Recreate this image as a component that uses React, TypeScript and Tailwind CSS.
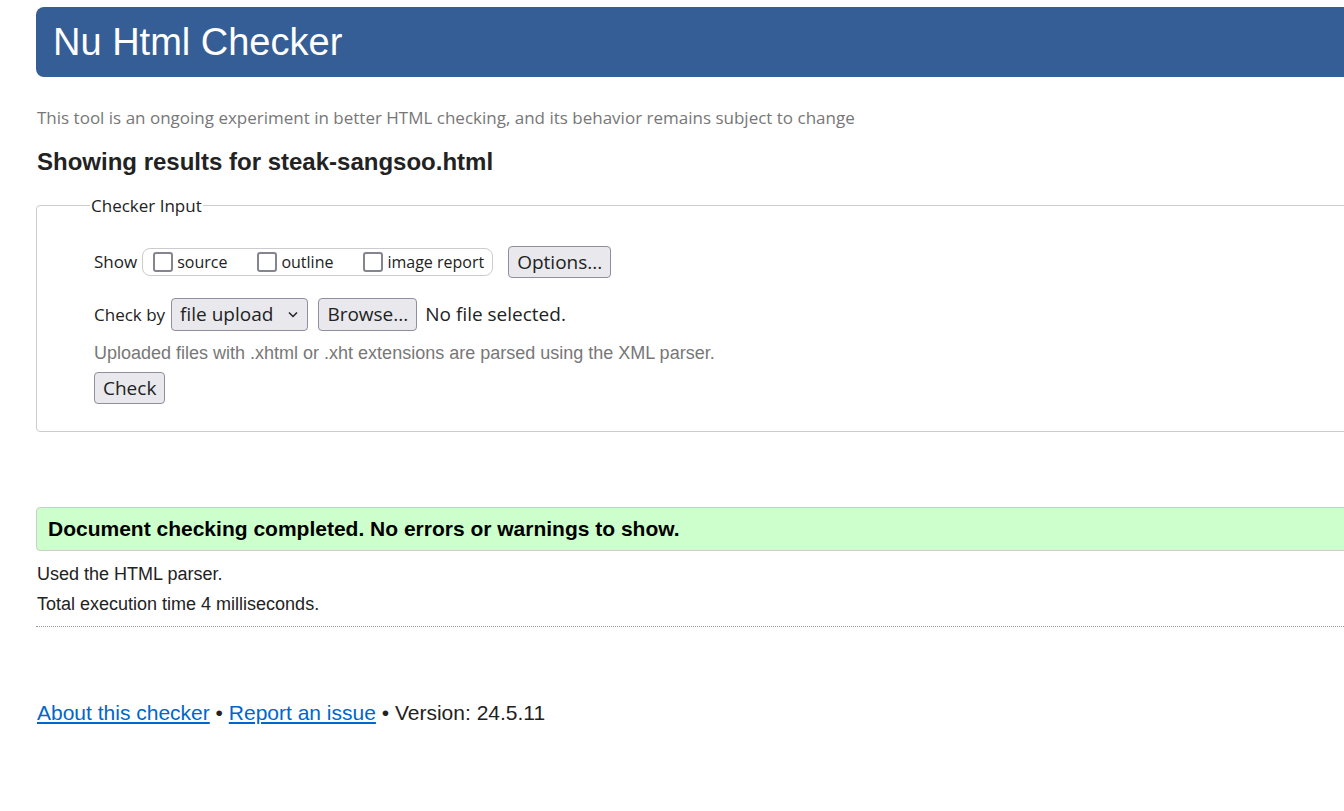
import React from "react";

const ui = { fontFamily: '"Open Sans", "Noto Sans", sans-serif' };
const arial = { fontFamily: '"Liberation Sans", Arial, sans-serif' };

function Box() {
  return <span className="inline-block w-[20px] h-[20px] border-2 border-[#85858f] rounded-[3px] bg-white mr-[4px]" />;
}

export default function App() {
  return (
    <div className="w-[1344px] h-[811px] overflow-hidden bg-white text-[#222]" style={arial}>
      <div className="w-[1400px] pl-[36px] pt-[7px]">
        <div className="h-[70px] bg-[#365e96] rounded-l-[8px] flex items-center pl-[17px]">
          <h1 className="text-[38px] text-white leading-none">Nu Html Checker</h1>
        </div>
        <p className="mt-[29px] text-[17px] text-[#777] leading-[24px] pl-[1px]" style={ui}>
          This tool is an ongoing experiment in better HTML checking, and its behavior remains subject to change
        </p>
        <h2 className="mt-[18px] text-[24px] font-bold leading-[28px] pl-[1px]">Showing results for steak-sangsoo.html</h2>
        <fieldset className="mt-[29px] border border-[#ccc] rounded-l-[4px] pl-[57px] pt-[28px] relative h-[227px]" style={ui}>
          <legend className="px-[1px] text-[17px] leading-[17px] text-[#222] absolute top-[-9px] left-[53px] bg-white">Checker Input</legend>
          <div className="flex items-center h-[32px] mt-[12px] text-[16px]">
            <span className="mr-[5px] text-[17px]">Show</span>
            <span className="flex items-center h-[28px] border border-[#ccc] rounded-[8px] pl-[10px] pr-[8px]">
              <label className="flex items-center"><Box />source</label>
              <label className="flex items-center ml-[30px]"><Box />outline</label>
              <label className="flex items-center ml-[30px]"><Box />image report</label>
            </span>
            <button className="ml-[15px] h-[32px] px-[8px] bg-[#e9e9ed] border border-[#8f8f9d] rounded-[4px] text-[19px] leading-none">Options...</button>
          </div>
          <div className="flex items-center h-[33px] mt-[20px] text-[17px]">
            <span className="mr-[6px]">Check by</span>
            <span className="flex items-center h-[33px] border border-[#8f8f9d] rounded-[4px] bg-[#e9e9ed] pl-[8px] pr-[9px] text-[19px]">
              file upload
              <svg className="ml-[15px]" width="10" height="7" viewBox="0 0 10 7"><path d="M1 1.5 L5 5.5 L9 1.5" stroke="#222" strokeWidth="1.5" fill="none" /></svg>
            </span>
            <button className="ml-[10px] h-[33px] px-[8px] bg-[#e9e9ed] border border-[#8f8f9d] rounded-[4px] text-[19px] leading-none">Browse...</button>
            <span className="ml-[8px] text-[19px]">No file selected.</span>
          </div>
          <p className="mt-[10px] text-[18px] text-[#777] leading-[24px]" style={arial}>Uploaded files with .xhtml or .xht extensions are parsed using the XML parser.</p>
          <button className="mt-[7px] h-[32px] px-[8px] bg-[#e9e9ed] border border-[#8f8f9d] rounded-[4px] text-[19px] leading-none">Check</button>
        </fieldset>
        <div className="mt-[75px] h-[44px] bg-[#ccffcc] border border-[#ccc] rounded-l-[4px] flex items-center pl-[11px]">
          <p className="text-[21px] font-bold text-black">Document checking completed. No errors or warnings to show.</p>
        </div>
        <p className="mt-[13px] text-[18px] leading-[20px] pl-[1px]">Used the HTML parser.</p>
        <p className="mt-[10px] text-[18px] leading-[20px] pl-[1px]">Total execution time 4 milliseconds.</p>
        <div className="mt-[12px] border-t border-dotted border-[#999]" />
        <p className="mt-[74px] text-[21px] leading-[24px] pl-[1px]">
          <a className="text-[#0066cc] underline">About this checker</a> • <a className="text-[#0066cc] underline">Report an issue</a> • Version: 24.5.11
        </p>
      </div>
    </div>
  );
}
